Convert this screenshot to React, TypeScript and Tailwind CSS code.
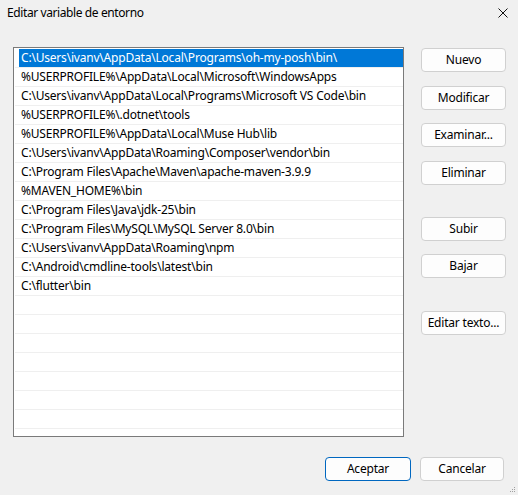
import React from "react";

const paths = [
  "C:\\Users\\ivanv\\AppData\\Local\\Programs\\oh-my-posh\\bin\\",
  "%USERPROFILE%\\AppData\\Local\\Microsoft\\WindowsApps",
  "C:\\Users\\ivanv\\AppData\\Local\\Programs\\Microsoft VS Code\\bin",
  "%USERPROFILE%\\.dotnet\\tools",
  "%USERPROFILE%\\AppData\\Local\\Muse Hub\\lib",
  "C:\\Users\\ivanv\\AppData\\Roaming\\Composer\\vendor\\bin",
  "C:\\Program Files\\Apache\\Maven\\apache-maven-3.9.9",
  "%MAVEN_HOME%\\bin",
  "C:\\Program Files\\Java\\jdk-25\\bin",
  "C:\\Program Files\\MySQL\\MySQL Server 8.0\\bin",
  "C:\\Users\\ivanv\\AppData\\Roaming\\npm",
  "C:\\Android\\cmdline-tools\\latest\\bin",
  "C:\\flutter\\bin",
];

const rows = [...paths, ...Array(8).fill("")];

function Btn({ label, className = "" }: { label: string; className?: string }) {
  return (
    <button
      className={`flex h-[24px] w-[85px] items-center justify-center rounded-[4px] border border-[#d0d0d0] bg-[#fdfdfd] text-[12px] text-black ${className}`}
    >
      {label}
    </button>
  );
}

export default function App() {
  return (
    <div
      className="relative h-[495px] w-[518px] overflow-hidden bg-[#f0f0f0] text-[12px] tracking-[-0.2px] text-black"
      style={{ fontFamily: '"Segoe UI", "Noto Sans", sans-serif' }}
    >
      <div className="flex h-[26px] items-center justify-between pl-[7px] pr-[8px]">
        <span className="tracking-[-0.4px]">Editar variable de entorno</span>
        <svg width="12" height="12" viewBox="0 0 12 12" className="mr-[1px]">
          <path d="M1.5 1.5 L10.5 10.5 M10.5 1.5 L1.5 10.5" stroke="#111" strokeWidth="1" />
        </svg>
      </div>

      <div className="mt-[21px] flex pl-[13px]">
        <div className="h-[390px] w-[391px] overflow-hidden border border-[#7a7a7a] bg-white pl-[1px] pt-[1px]">
          {rows.map((p, i) => (
            <div key={i} className="h-[19px] border-b border-[#efefef] pl-[4px]">
              <div
                className={`flex h-[18px] items-center whitespace-nowrap pl-[2px] leading-none ${
                  i === 0 ? "bg-[#0078d7] text-white" : ""
                }`}
              >
                {p}
              </div>
            </div>
          ))}
        </div>

        <div className="ml-[17px] flex flex-col pt-[1px]">
          <Btn label="Nuevo" />
          <Btn label="Modificar" className="mt-[14px]" />
          <Btn label="Examinar..." className="mt-[13px]" />
          <Btn label="Eliminar" className="mt-[14px]" />
          <Btn label="Subir" className="mt-[32px]" />
          <Btn label="Bajar" className="mt-[13px]" />
          <Btn label="Editar texto..." className="mt-[33px]" />
        </div>
      </div>

      <div className="mt-[20px] flex justify-end gap-[9px] pr-[14px]">
        <button className="flex h-[24px] w-[86px] items-center justify-center rounded-[4px] border border-[#0067c0] bg-[#fdfdfd] text-[12px]">
          Aceptar
        </button>
        <button className="flex h-[24px] w-[84px] items-center justify-center rounded-[4px] border border-[#d0d0d0] bg-[#fdfdfd] text-[12px]">
          Cancelar
        </button>
      </div>

      <svg width="6" height="6" viewBox="0 0 6 6" className="absolute bottom-[2px] right-[2px]">
        <rect x="4" y="0" width="1" height="1" fill="#a0a0a0" />
        <rect x="2" y="2" width="1" height="1" fill="#a0a0a0" />
        <rect x="4" y="2" width="1" height="1" fill="#a0a0a0" />
        <rect x="0" y="4" width="1" height="1" fill="#a0a0a0" />
        <rect x="2" y="4" width="1" height="1" fill="#a0a0a0" />
        <rect x="4" y="4" width="1" height="1" fill="#a0a0a0" />
      </svg>
    </div>
  );
}
